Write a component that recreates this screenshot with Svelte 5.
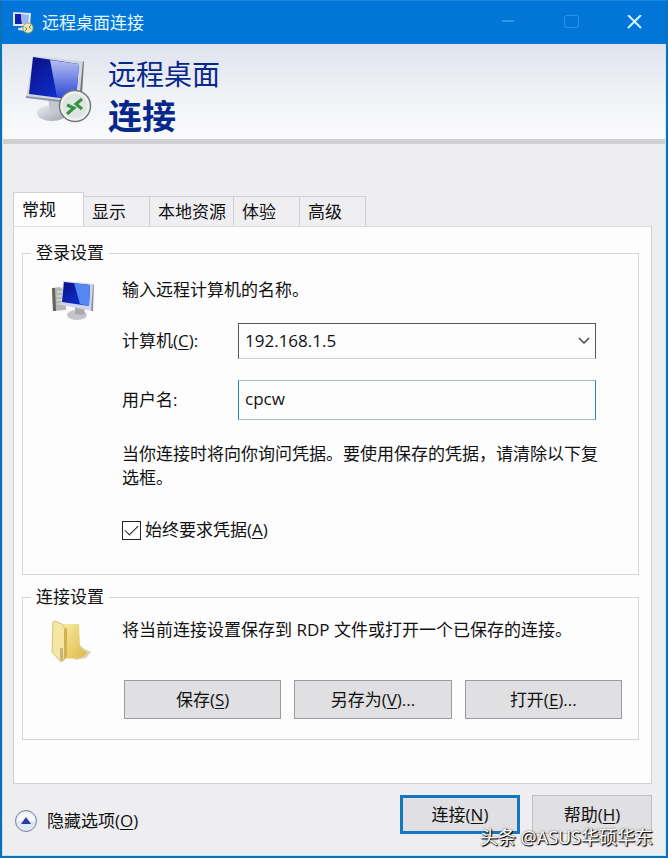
<script>
  const tabs = ["常规", "显示", "本地资源", "体验", "高级"];
  let activeTab = $state("常规");

  let computer = $state("192.168.1.5");
  let userName = $state("cpcw");
  let alwaysAsk = $state(true);
</script>

<div class="window">
  <div class="titlebar">
    <svg class="app-icon" width="22" height="24" viewBox="0 0 22 24">
      <path d="M1 1 L19 2 L18 15 L1 15 Z" fill="#dfe6f0" />
      <path d="M3 3 L9 3 L10 13 L3 13 Z" fill="#1020a8" />
      <path d="M9 3 L17 4 L16 13 L10 13 Z" fill="#9db4ec" />
      <path d="M6 17 L12 16 L13 20 L6 19 Z" fill="#d5dbe2" />
      <circle cx="16" cy="17" r="5" fill="#e7e6c0" stroke="#b0a65b" />
      <path d="M13 16 l2 2 -2 2 M19 14 l-2 2 2 2" fill="none" stroke="#6b8f3c" />
    </svg>
    <span class="title">远程桌面连接</span>
    <div class="controls">
      <button aria-label="最小化" disabled>
        <svg width="16" height="16" viewBox="0 0 16 16"><path d="M1 6 H13" stroke="#3aa0ee" stroke-width="1.5" /></svg>
      </button>
      <button aria-label="最大化" disabled>
        <svg width="16" height="16" viewBox="0 0 16 16"><rect x="0.5" y="0.5" width="14" height="12" rx="2" fill="none" stroke="#2c92e6" /></svg>
      </button>
      <button aria-label="关闭">
        <svg width="16" height="16" viewBox="0 0 16 16"><path d="M1 0 L14 13 M14 0 L1 13" stroke="#d8f6ff" stroke-width="2" /></svg>
      </button>
    </div>
  </div>

  <header>
    <svg width="68" height="70" viewBox="0 0 68 70">
      <defs>
        <linearGradient id="screen" x1="0" y1="0" x2="1" y2="1">
          <stop offset="0" stop-color="#0a0f86" />
          <stop offset="1" stop-color="#1238e0" />
        </linearGradient>
        <linearGradient id="glare" x1="0" y1="0" x2="0" y2="1">
          <stop offset="0" stop-color="#b4bff0" />
          <stop offset="1" stop-color="#2743d6" />
        </linearGradient>
        <linearGradient id="stand" x1="0" y1="0" x2="1" y2="1">
          <stop offset="0" stop-color="#eceef2" />
          <stop offset="1" stop-color="#9da4b0" />
        </linearGradient>
      </defs>
      <ellipse cx="26" cy="59" rx="15" ry="8" fill="url(#stand)" />
      <path d="M22 44 L38 47 L38 58 L24 57 Z" fill="#c3c8d0" />
      <path d="M7 2 L55 7 L58 9 L54 48 L51 49 L0 43 Z" fill="#d2d6df" />
      <path d="M57 7 L58 8 L56 40 L54 48 L53 48 Z" fill="#77736f" />
      <path d="M7 3 L53 10 L50 46 L3 40 Z" fill="url(#screen)" />
      <path d="M24 6 L53 10 L50 46 L31 43 Z" fill="url(#glare)" />
      <path d="M0 42 L51 48 L51 50 L0 44 Z" fill="#8f96a8" />
      <circle cx="49" cy="52" r="15.5" fill="#f0f2f2" stroke="#77777b" stroke-width="1.5" />
      <circle cx="49" cy="52" r="12.5" fill="#dfe5e2" />
      <path d="M41 51 L48 54 L41 60 M56 45 L50 50 L56 55" fill="none" stroke="#35933f" stroke-width="3" />
    </svg>
    <h1>
      <span>远程桌面</span>
      <strong>连接</strong>
    </h1>
  </header>

  <main>
    <div class="tabs" role="tablist">
      {#each tabs as tab}
        <button
          role="tab"
          class:active={tab === activeTab}
          class:wide={tab.length > 2}
          aria-selected={tab === activeTab}
          onclick={() => (activeTab = tab)}
        >{tab}</button>
      {/each}
    </div>

    <div class="panel">
      <fieldset>
        <legend>登录设置</legend>
        <div class="group">
          <svg class="computer-icon" width="44" height="42" viewBox="0 0 44 42">
            <path d="M1 8 L9 7 L15 12 L15 30 L2 31 Z" fill="#b6b6b2" />
            <path d="M1 8 L4 8 L5 31 L2 31 Z" fill="#62625e" />
            <path d="M6 12 H13 M6 16 H13 M6 20 H13 M6 24 H13" stroke="#ecece8" />
            <ellipse cx="26" cy="35" rx="10" ry="5" fill="#c4c4ca" />
            <path d="M24 26 L34 28 L33 35 L24 34 Z" fill="#a9a9b2" />
            <path d="M12 1 L42 4 L41 31 L10 25 Z" fill="#d0d5ea" />
            <path d="M42 4 L43 5 L42 31 L40 31 Z" fill="#8f8fa4" />
            <path d="M13 2 L39 5 L38 26 L11 22 Z" fill="url(#screen)" />
            <path d="M23 3 L39 5 L38 26 L29 24 Z" fill="#5686f2" />
          </svg>
          <div class="content">
            <p>输入远程计算机的名称。</p>
            <div class="field">
              <label for="computer">计算机(<u>C</u>):</label>
              <div class="combo">
                <select id="computer" bind:value={computer}>
                  <option>192.168.1.5</option>
                </select>
                <svg width="12" height="8" viewBox="0 0 12 8"><path d="M1 1 L6 6 L11 1" fill="none" stroke="#444" stroke-width="1.5" /></svg>
              </div>
            </div>
            <div class="field">
              <label for="user">用户名:</label>
              <input id="user" class="text" type="text" spellcheck="false" bind:value={userName} />
            </div>
            <p class="note">当你连接时将向你询问凭据。要使用保存的凭据，请清除以下复选框。</p>
            <label class="check">
              <input type="checkbox" bind:checked={alwaysAsk} />
              <span>始终要求凭据(<u>A</u>)</span>
            </label>
          </div>
        </div>
      </fieldset>

      <fieldset>
        <legend>连接设置</legend>
        <div class="group">
          <svg class="folder-icon" width="44" height="44" viewBox="0 0 44 44">
            <defs>
              <linearGradient id="folder" x1="0" y1="0" x2="1" y2="1">
                <stop offset="0" stop-color="#f9e9a0" />
                <stop offset="1" stop-color="#dcb84a" />
              </linearGradient>
            </defs>
            <path d="M29 25 L32 28 L40 32 L35 38 L24 40 Z" fill="#d9d2b4" />
            <path d="M12 4 L28 4 L29 27 L36 33 Q30 41 14 38 Z" fill="url(#folder)" />
            <path d="M4 1 L11 4 Q15 7 14 20 L13 40 L10 42 L1 32 L2 2 Z" fill="#f7e6a2" stroke="#d6bf7a" />
            <path d="M13 9 L16 8 L16 37 L13 40 Z" fill="#d3b250" />
            <path d="M9 28 L12 28 L12 41 L9 40 Z" fill="#c9b67c" />
          </svg>
          <div class="content compact">
            <p>将当前连接设置保存到 RDP 文件或打开一个已保存的连接。</p>
            <div class="actions">
              <button class="btn">保存(<u>S</u>)</button>
              <button class="btn">另存为(<u>V</u>)...</button>
              <button class="btn">打开(<u>E</u>)...</button>
            </div>
          </div>
        </div>
      </fieldset>
    </div>
  </main>

  <footer>
    <button class="toggle">
      <svg width="24" height="24" viewBox="0 0 24 24">
        <circle cx="12" cy="12" r="10.5" fill="#dfe6f7" stroke="#7d8494" />
        <path d="M3 12 A9 9 0 0 1 21 12 Z" fill="#f6f8fd" />
        <path d="M12 8 L17 15 H7 Z" fill="#2b3c9c" />
      </svg>
      <span>隐藏选项(<u>O</u>)</span>
    </button>
    <div class="buttons">
      <button class="btn default">连接(<u>N</u>)</button>
      <button class="btn">帮助(<u>H</u>)</button>
    </div>
  </footer>

  <span class="watermark">头条 @ASUS华硕华东</span>
</div>

<style>
  :global(body) {
    margin: 0;
  }

  .window {
    position: relative;
    box-sizing: border-box;
    min-height: 100vh;
    display: flex;
    flex-direction: column;
    border: 2px solid #0f6fb5;
    border-top: 1px solid #1b87e0;
    background: #eeeef1;
    box-shadow: inset 0 0 0 1px #b9ecfa;
    color: #111;
    font-family: "Open Sans", "Noto Sans CJK SC", sans-serif;
    font-size: 17px;
    line-height: 24px;
  }

  button,
  input,
  select {
    box-sizing: border-box;
    margin: 0;
    font: inherit;
    color: inherit;
  }

  u {
    text-underline-offset: 2px;
  }

  .titlebar {
    display: flex;
    align-items: center;
    height: 43px;
    padding-left: 10px;
    background: #0276d8;
    color: #e3f7ff;
  }

  .title {
    flex: 1;
    margin-left: 8px;
  }

  .controls {
    display: flex;
  }

  .controls button {
    display: flex;
    align-items: center;
    justify-content: center;
    width: 63px;
    height: 40px;
    padding: 0;
    border: none;
    background: none;
  }

  header {
    display: flex;
    gap: 14px;
    margin: 0 1px;
    padding: 10px 23px 1px;
    border-bottom: 5px solid #cfcfd2;
    background: linear-gradient(#dfe3ed, #eff1f5 50%, #fbfbfd);
  }

  h1 {
    margin: 0;
    color: #06288a;
    font-size: 28px;
    font-weight: 400;
    line-height: 40px;
  }

  h1 span,
  h1 strong {
    display: block;
  }

  h1 strong {
    font-size: 34px;
    font-weight: 700;
    line-height: 44px;
  }

  main {
    padding: 48px 14px 0 11px;
  }

  .tabs {
    display: flex;
    align-items: flex-end;
  }

  .tabs button {
    width: 66px;
    height: 30px;
    padding: 0 0 0 8px;
    border: 1px solid #d0d0d4;
    border-bottom: none;
    border-left: none;
    background: #efeff1;
    text-align: left;
    white-space: nowrap;
  }

  .tabs button.wide {
    width: 84px;
  }

  .tabs button.active {
    width: 71px;
    height: 34px;
    border-left: 1px solid #d0d0d4;
    background: #fdfdfe;
  }

  .panel {
    padding: 15px 12px 43px 8px;
    border: 1px solid #d0d0d4;
    border-top-color: #dcdce0;
    background: #fdfdfe;
  }

  fieldset {
    min-width: 0;
    margin: 0;
    padding: 0 0 20px;
    border: 1px solid #d4d4d9;
  }

  fieldset + fieldset {
    margin-top: 11px;
  }

  legend {
    margin-left: 8px;
    padding: 0 5px;
    line-height: 22px;
  }

  .group {
    display: grid;
    grid-template-columns: 71px 1fr;
    padding-left: 28px;
  }

  .computer-icon {
    margin-top: 16px;
  }

  .folder-icon {
    margin-top: 12px;
  }

  .content {
    padding: 14px 16px 0 0;
  }

  .compact {
    padding-top: 10px;
  }

  p {
    margin: 0;
  }

  .field {
    display: grid;
    grid-template-columns: 116px 1fr;
    align-items: center;
    margin: 21px 26px 0 0;
  }

  .combo {
    display: grid;
    align-items: center;
  }

  .combo select,
  .combo svg {
    grid-area: 1 / 1;
  }

  .combo svg {
    justify-self: end;
    margin-right: 6px;
    pointer-events: none;
  }

  select {
    appearance: none;
    width: 100%;
    height: 36px;
    padding: 0 6px;
    border: 1px solid #55555a;
    border-bottom-color: #cfcfd4;
    border-radius: 0;
    background: #fdfdfe;
  }

  .text {
    width: 100%;
    height: 40px;
    padding: 0 6px 4px;
    border: 1px solid #a9bccb;
    border-left-color: #2f7fae;
    border-right-color: #2f7fae;
    background: #fdfdfe;
    outline: none;
  }

  .note {
    margin: 22px 20px 0 0;
  }

  .check {
    display: flex;
    align-items: center;
    gap: 4px;
    margin: 28px 0 12px;
  }

  .check input {
    appearance: none;
    display: grid;
    place-items: center;
    width: 19px;
    height: 19px;
    border: 1px solid #222;
    background: #fff;
  }

  .check input:checked::before {
    content: "";
    width: 13px;
    height: 7px;
    margin-bottom: 4px;
    border: solid #222;
    border-width: 0 0 1px 1px;
    box-sizing: border-box;
    transform: rotate(-45deg);
  }

  .actions {
    display: grid;
    grid-template-columns: repeat(3, 1fr);
    gap: 13px;
    margin: 38px 0 0 2px;
  }

  .btn {
    height: 39px;
    padding: 0;
    border: 1px solid #9b9a9e;
    background: #e0dfe1;
  }

  footer {
    display: flex;
    justify-content: space-between;
    padding: 11px 14px 20px 12px;
  }

  .toggle {
    display: flex;
    align-items: center;
    gap: 9px;
    margin-top: 13px;
    padding: 0;
    border: none;
    background: none;
  }

  .buttons {
    display: flex;
    gap: 12px;
  }

  .buttons .btn {
    width: 120px;
    border-color: #c2bfc3;
  }

  .buttons .default {
    border: 3px solid #1577c0;
  }

  .watermark {
    position: absolute;
    right: 13px;
    bottom: 7px;
    color: #fff;
    font-size: 18px;
    text-shadow: 1px 1px 1px #111, 1px 1px 1px #333, 0 0 2px #555;
  }
</style>
